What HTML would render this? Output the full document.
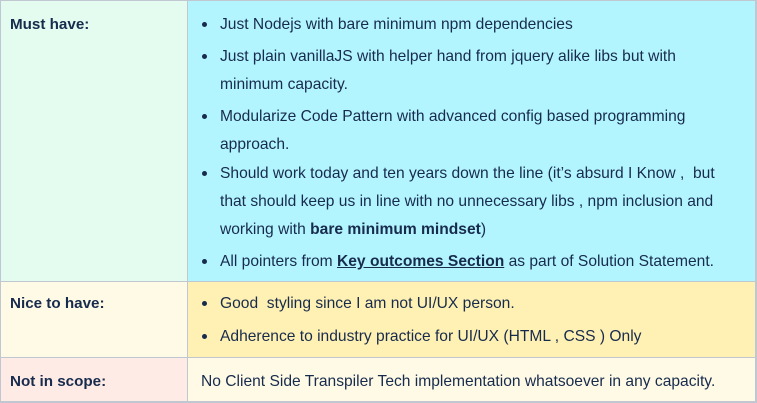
<!DOCTYPE html>
<html><head><style>
html,body{margin:0;padding:0;background:#fff;}
body{width:757px;height:403px;position:relative;overflow:hidden;font-family:"Liberation Sans",sans-serif;font-size:15.6px;color:#172b4d;}
.c{position:absolute;box-sizing:border-box;}
.l{position:absolute;white-space:nowrap;line-height:22px;}
.b{position:absolute;width:5px;height:5px;border-radius:50%;background:#172b4d;}
b{font-weight:bold;}
.k{font-size:15.2px;}
</style></head><body>
<div class="c" style="left:0;top:0;width:757px;height:403px;background:#c1c7d0"></div>
<div class="c" style="left:1px;top:1px;width:186px;height:280px;background:#e3fcef"></div>
<div class="c" style="left:188px;top:1px;width:567px;height:280px;background:#b3f5ff"></div>
<div class="c" style="left:1px;top:282px;width:186px;height:75px;background:#fffae6"></div>
<div class="c" style="left:188px;top:282px;width:567px;height:75px;background:#fff0b3"></div>
<div class="c" style="left:1px;top:358px;width:186px;height:43px;background:#ffebe6"></div>
<div class="c" style="left:188px;top:358px;width:567px;height:43px;background:#fffae6"></div>

<div class="l k" style="left:10px;top:14px"><b>Must have:</b></div>
<div class="l k" style="left:10px;top:293px"><b>Nice to have:</b></div>
<div class="l k" style="left:10px;top:371px"><b>Not in scope:</b></div>

<div class="b" style="left:202px;top:22px"></div>
<div class="l" style="left:220px;top:14px">Just Nodejs with bare minimum npm dependencies</div>
<div class="b" style="left:202px;top:54px"></div>
<div class="l" style="left:220px;top:46px">Just plain vanillaJS with helper hand from jquery alike libs but with</div>
<div class="l" style="left:220px;top:74px">minimum capacity.</div>
<div class="b" style="left:202px;top:114px"></div>
<div class="l" style="left:220px;top:106px">Modularize Code Pattern with advanced config based programming</div>
<div class="l" style="left:220px;top:134px">approach.</div>
<div class="b" style="left:202px;top:171px"></div>
<div class="l" style="left:220px;top:163px">Should work today and ten years down the line (it’s absurd I Know ,&nbsp; but</div>
<div class="l" style="left:220px;top:191px">that should keep us in line with no unnecessary libs , npm inclusion and</div>
<div class="l" style="left:220px;top:219px">working with <b>bare minimum mindset</b>)</div>
<div class="b" style="left:202px;top:259px"></div>
<div class="l" style="left:220px;top:251px">All pointers from <b><u>Key outcomes Section</u></b> as part of Solution Statement.</div>

<div class="b" style="left:202px;top:301px"></div>
<div class="l" style="left:220px;top:293px">Good&nbsp; styling since I am not UI/UX person.</div>
<div class="b" style="left:202px;top:334px"></div>
<div class="l" style="left:220px;top:326px">Adherence to industry practice for UI/UX (HTML , CSS ) Only</div>

<div class="l" style="left:201px;top:371px">No Client Side Transpiler Tech implementation whatsoever in any capacity.</div>
</body></html>
